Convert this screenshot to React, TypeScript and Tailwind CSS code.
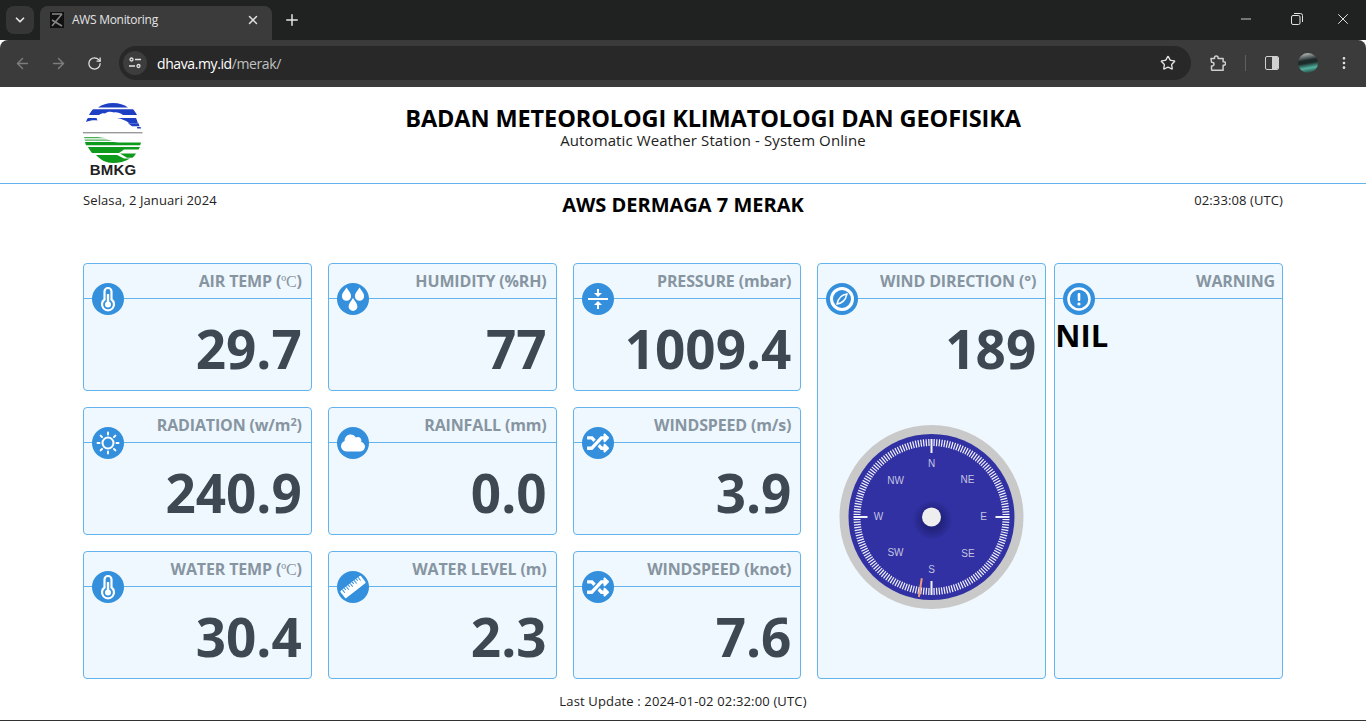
import { FaCloud, FaRandom } from "react-icons/fa";
import { ChevronDown, X, Plus, ArrowLeft, ArrowRight, RotateCw, Star, Minus, MoreVertical } from "lucide-react";
import type { ReactNode } from "react";

function Badge({ children }: { children: ReactNode }) {
  return (
    <div className="absolute left-2 top-[19px] flex size-8 items-center justify-center rounded-full bg-[#3490dc] text-white">
      {children}
    </div>
  );
}

const Thermo = () => (
  <svg viewBox="0 0 32 32" className="size-8">
    <path d="M12.500 8.500a3.500 3.500 0 0 1 7 0v8a6 6 0 1 1-7 0z" fill="none" stroke="#fff" strokeWidth="2.200" />
    <circle cx="16" cy="21.500" r="3" fill="#fff" />
    <rect x="14.800" y="11" width="2.400" height="9" fill="#fff" />
  </svg>
);

const Drops = () => (
  <svg viewBox="0 0 32 32" className="size-8" fill="#fff">
    <path d="M9.500 4.500c2.200 3.500 4.600 5.800 4.600 8.700a4.600 4.600 0 0 1-9.200 0c0-2.900 2.400-5.200 4.600-8.700z" />
    <path d="M22.500 4.500c2.200 3.500 4.600 5.800 4.600 8.700a4.600 4.600 0 0 1-9.200 0c0-2.900 2.400-5.200 4.600-8.700z" />
    <path d="M16 15c2.200 3.500 4.400 5.700 4.400 8.500a4.400 4.400 0 0 1-8.800 0c0-2.800 2.200-5 4.400-8.500z" />
  </svg>
);

const Compress = () => (
  <svg viewBox="0 0 32 32" className="size-8" fill="#fff">
    <rect x="6" y="15" width="20" height="2" />
    <rect x="15" y="6" width="2" height="6" />
    <path d="M12 10h8l-4 4z" />
    <rect x="15" y="20" width="2" height="6" />
    <path d="M12 22h8l-4-4z" />
  </svg>
);

const Sun = () => (
  <svg viewBox="0 0 32 32" className="size-8" fill="none" stroke="#fff" strokeWidth="2" strokeLinecap="round">
    <circle cx="16" cy="16" r="5.500" />
    <path d="M16 5.500v2M16 24.500v2M5.500 16h2M24.500 16h2M8.600 8.600l1.400 1.400M22 22l1.400 1.400M8.600 23.400l1.400-1.400M22 10l1.400-1.400" />
  </svg>
);

const Ruler = () => (
  <svg viewBox="0 0 32 32" className="size-8">
    <g transform="rotate(-38 16 16)">
      <rect x="3" y="11.500" width="26" height="9" rx="1" fill="#fff" />
      <path d="M6 11.500v4M8.500 11.500v2.500M11 11.500v4M13.500 11.500v2.500M16 11.500v4M18.500 11.500v2.500M21 11.500v4M23.500 11.500v2.500M26 11.500v4" stroke="#3490dc" strokeWidth="1" />
    </g>
  </svg>
);

const CompassIcon = () => (
  <svg viewBox="0 0 32 32" className="size-8">
    <circle cx="16" cy="16" r="10.500" fill="none" stroke="#fff" strokeWidth="3" />
    <path d="M21 11c-4.500.5-8.500 3.500-10 10 4.500-.5 8.500-3.500 10-10z" fill="none" stroke="#fff" strokeWidth="1.400" />
  </svg>
);

const Alert = () => (
  <svg viewBox="0 0 32 32" className="size-8">
    <circle cx="16" cy="16" r="10.500" fill="none" stroke="#fff" strokeWidth="2.500" />
    <rect x="14.700" y="10" width="2.600" height="8" rx="1" fill="#fff" />
    <circle cx="16" cy="21" r="1.600" fill="#fff" />
  </svg>
);

const Celsius = () => <span className="font-['Liberation_Serif',serif] font-normal">ºC</span>;

function Card({ title, value, icon }: { title: ReactNode; value: string; icon: ReactNode }) {
  return (
    <div className="relative rounded-[4px] border border-[#63b3ed] bg-[#eff8ff]">
      <div className="h-[35px] border-b border-[#63b3ed] pr-[9px] pt-[5px] text-right text-[16px] leading-[24px] font-bold tracking-[-0.15px] text-[#8795a1]">
        {title}
      </div>
      <Badge>{icon}</Badge>
      <div className="pr-[9px] pt-[14px] text-right text-[53px] leading-[72px] font-bold text-[#3d4852]">{value}</div>
    </div>
  );
}

function Compass() {
  const ticks = [];
  for (let a = 0; a < 360; a += 2) {
    const main = a % 45 === 0;
    ticks.push(
      <line key={a} x1="100" y1={main ? 36 : 29} x2="100" y2="22" strokeWidth={main ? 2 : 1.200} transform={`rotate(${a} 100 100)`} />
    );
  }
  const labels: [string, number, number][] = [
    ["N", 100, 46], ["NE", 136, 62], ["E", 152, 99], ["SE", 136.500, 136], ["S", 100, 152], ["SW", 64, 135], ["W", 47, 99], ["NW", 64, 63],
  ];
  return (
    <svg viewBox="0 0 200 200" className="size-[200px] -translate-x-[0.5px]">
      <defs>
        <radialGradient id="hubShade">
          <stop offset="45%" stopColor="#15155c" stopOpacity="0.55" />
          <stop offset="100%" stopColor="#15155c" stopOpacity="0" />
        </radialGradient>
      </defs>
      <circle cx="100" cy="100" r="92" fill="#c9c9c9" />
      <circle cx="100" cy="100" r="83" fill="#3131a3" />
      <g stroke="#f2f2fa">{ticks}</g>
      <g fill="#c4c4e0" fontFamily="'Liberation Sans', sans-serif" fontSize="10" textAnchor="middle" dominantBaseline="central">
        {labels.map(([t, x, y]) => (
          <text key={t} x={x} y={y}>{t}</text>
        ))}
      </g>
      <line x1="100" y1="19" x2="100" y2="38" stroke="#ea9a7c" strokeWidth="2" transform="rotate(189 100 100)" />
      <circle cx="101" cy="103" r="20" fill="url(#hubShade)" />
      <circle cx="100" cy="100" r="9.500" fill="#eeeeee" />
    </svg>
  );
}

function BmkgLogo() {
  return (
    <div className="flex w-[60px] flex-col items-center">
      <svg viewBox="0 0 60 60" className="h-[60px] w-[60px]">
        <path d="M15 4.500C19 1.500 24 0 30 0s11 1.500 15 4.500z" fill="#1d3fc4" />
        <path d="M6 12c1-2 2.500-4 4-5.700h40c1.500 1.700 3 3.700 4 5.700H40c-3-2-6-3-9-2.500-3-1.500-7-1-9 1-2-.5-4 0-6 1.500z" fill="#1d3fc4" />
        <path d="M3 19c.5-1.500 1-3 2-4h8.500l1 2.500c-4-.5-8 0-11.500 1.500z" fill="#1d3fc4" />
        <path d="M34 15h19c.7 1.500 1.300 3 1.800 5H46c-3-2.500-7-4-12-5z" fill="#1d3fc4" />
        <path d="M45 20.300h10.500c.4 1 .7 2 1 2.900H49z" fill="#1d3fc4" />
        <path d="M54 24h3.500l.7 1.500h-4z" fill="#1d3fc4" />
        <rect x="0" y="29" width="59.500" height="1.400" fill="#9a9a9a" />
        <path d="M1 34h14l8 1.300H1.300z" fill="#4fae58" />
        <path d="M1.500 36.500h22l6 1.300H2z" fill="#4fae58" />
        <path d="M2 39h28l6 .5h22l-.8 2.800H3z" fill="#0e9a1a" />
        <path d="M5 44h52l-1.500 2.500H41L36 50H9c-1.500-1.800-3-4-4-6z" fill="#0e9a1a" />
        <path d="M37 50.500h16c-.8 1.500-2 3-3.500 4.200H44z" fill="#0e9a1a" />
        <path d="M13 52h21l7 3.500h6C42 58.500 36 60 30 60c-6.500 0-12.500-3-17-8z" fill="#0e9a1a" />
      </svg>
      <div className="-mt-[1px] font-['Liberation_Sans',sans-serif] text-[15px] leading-[15px] font-bold tracking-[0.2px] text-[#222]">BMKG</div>
    </div>
  );
}

function BrowserChrome() {
  return (
    <div className="font-['Open_Sans',sans-serif] text-[#e3e3e3]">
      <div className="flex h-10 items-end bg-[#202221] pl-[6px]">
        <div className="mb-[6px] flex size-7 items-center justify-center rounded-lg bg-[#363636]">
          <ChevronDown size={14} strokeWidth={3} />
        </div>
        <div className="ml-[6px] flex h-[34px] w-[232px] items-center rounded-t-lg bg-[#3b3b3b] pb-[6px] pl-[10px] pr-[12px]">
          <svg viewBox="0 0 14 16" className="h-4 w-[14px]">
            <rect width="14" height="16" fill="#111" />
            <path d="M2 14 12 2M2 8l10 6M2 2h10" stroke="#888" strokeWidth="1.500" fill="none" />
          </svg>
          <span className="ml-2 flex-1 text-[12px] tracking-[-0.3px]">AWS Monitoring</span>
          <X size={14} strokeWidth={2.500} />
        </div>
        <Plus size={18} className="mb-[11px] ml-[11px]" />
        <div className="mb-[12px] ml-auto flex items-center pr-[14px]">
          <Minus size={16} strokeWidth={1.300} className="mr-[37px]" />
          <svg viewBox="0 0 12 12" className="mr-[31px] size-3" fill="none" stroke="#e3e3e3" strokeWidth="1">
            <rect x="0.500" y="2.500" width="8.500" height="9" rx="1.500" />
            <path d="M3 .5h6.500a2 2 0 0 1 2 2V9" />
          </svg>
          <X size={18} strokeWidth={1.300} />
        </div>
      </div>
      <div className="flex h-[47px] items-center rounded-t-lg bg-[#3b3b3b] pb-[1px] pl-[14px] pr-[14px]">
        <ArrowLeft size={17} className="text-[#7d7d7d]" />
        <ArrowRight size={17} className="ml-[19px] text-[#7d7d7d]" />
        <RotateCw size={15} className="ml-[20px]" />
        <div className="ml-[17px] flex h-[34px] w-[1072px] items-center rounded-full bg-[#282828] pl-[4px] pr-[15px]">
          <div className="flex size-6 items-center justify-center rounded-full bg-[#3d3d3d]">
            <svg viewBox="0 0 14 12" className="h-3 w-[14px]" fill="none" stroke="#e3e3e3" strokeWidth="1.300">
              <circle cx="3.500" cy="2.500" r="1.500" /><path d="M7 2.500h6M1 9h6" /><circle cx="10.500" cy="9" r="1.500" />
            </svg>
          </div>
          <span className="ml-[10px] text-[14px] tracking-[-0.4px] text-white">dhava.my.id<span className="text-[#c0c0c0]">/merak/</span></span>
          <Star size={16} className="ml-auto" />
        </div>
        <svg viewBox="0 0 16 16" className="ml-[19px] size-4" fill="none" stroke="#d0d0d0" strokeWidth="1.500" strokeLinejoin="round">
          <path d="M1 3.500h3.500V2.800a1.800 1.800 0 0 1 3.600 0v.7h5v3.200h.7a1.800 1.800 0 0 1 0 3.600h-.7v5H2.500a1 1 0 0 1-1-1V11c1.800.2 2.500-1 2.500-2S3 7 1.500 7.200z" />
        </svg>
        <div className="ml-[19px] h-4 w-px bg-[#5f5f5f]" />
        <div className="ml-[19px] flex h-[14px] w-[14px] overflow-hidden rounded-[2px] border border-[#d0d0d0]">
          <div className="w-1/2" />
          <div className="w-1/2 bg-[#d0d0d0]" />
        </div>
        <div className="ml-[19px] size-5 rounded-full bg-[linear-gradient(170deg,#d8d8d8_0%,#1d2a2a_38%,#1d2a2a_50%,#4fb3a0_72%,#222_100%)]" />
        <MoreVertical size={16} className="ml-[18px]" />
      </div>
    </div>
  );
}

export default function App() {
  return (
    <div className="h-[721px] w-[1366px] overflow-hidden bg-white font-['Open_Sans',sans-serif] text-black">
      <BrowserChrome />
      <header className="h-[97px] border-b border-[#63b3ed]">
        <div className="mx-auto flex w-[1200px] pt-4">
          <BmkgLogo />
          <div className="flex-1 pt-[1px] text-center">
            <h1 className="text-[23.5px] leading-[28px] font-bold tracking-[-0.1px]">BADAN METEOROLOGI KLIMATOLOGI DAN GEOFISIKA</h1>
            <p className="text-[15px] leading-[16px] tracking-[0.1px] text-[#222]">Automatic Weather Station - System Online</p>
          </div>
        </div>
      </header>
      <main className="mx-auto w-[1200px]">
        <div className="flex h-[79px] items-start justify-between text-[13px] leading-[18px] tracking-[0.1px] text-[#222]">
          <span className="w-[250px] pt-[7px]">Selasa, 2 Januari 2024</span>
          <span className="pt-[7px] text-[20px] leading-[28px] font-bold tracking-normal text-black">AWS DERMAGA 7 MERAK</span>
          <span className="w-[250px] pt-[7px] text-right">02:33:08 (UTC)</span>
        </div>
        <div className="flex gap-4">
          <div className="grid h-[416px] w-[718.4px] grid-cols-3 grid-rows-3 gap-4">
            <Card title={<>AIR TEMP (<Celsius />)</>} value="29.7" icon={<Thermo />} />
            <Card title="HUMIDITY (%RH)" value="77" icon={<Drops />} />
            <Card title="PRESSURE (mbar)" value="1009.4" icon={<Compress />} />
            <Card title={<>RADIATION (w/m<sup className="text-[11px]">2</sup>)</>} value="240.9" icon={<Sun />} />
            <Card title="RAINFALL (mm)" value="0.0" icon={<FaCloud size={24} />} />
            <Card title="WINDSPEED (m/s)" value="3.9" icon={<FaRandom size={22} />} />
            <Card title={<>WATER TEMP (<Celsius />)</>} value="30.4" icon={<Thermo />} />
            <Card title="WATER LEVEL (m)" value="2.3" icon={<Ruler />} />
            <Card title="WINDSPEED (knot)" value="7.6" icon={<FaRandom size={22} />} />
          </div>
          <div className="flex flex-1 gap-2">
            <div className="relative flex-1 rounded-[4px] border border-[#63b3ed] bg-[#eff8ff]">
              <div className="h-[35px] border-b border-[#63b3ed] pr-[9px] pt-[5px] text-right text-[16px] leading-[24px] font-bold tracking-[-0.15px] text-[#8795a1]">WIND DIRECTION (°)</div>
              <Badge><CompassIcon /></Badge>
              <div className="pr-[9px] pt-[14px] text-right text-[53px] leading-[72px] font-bold text-[#3d4852]">189</div>
              <div className="mt-[32px] flex justify-center">
                <Compass />
              </div>
            </div>
            <div className="relative flex-1 rounded-[4px] border border-[#63b3ed] bg-[#eff8ff]">
              <div className="h-[35px] border-b border-[#63b3ed] pr-[7px] pt-[5px] text-right text-[16px] leading-[24px] font-bold tracking-[-0.15px] text-[#8795a1]">WARNING</div>
              <Badge><Alert /></Badge>
              <div className="pt-[16px] text-[31px] leading-[40px] font-bold text-black">NIL</div>
            </div>
          </div>
        </div>
        <p className="pt-[13px] text-center text-[13px] leading-[18px] tracking-[0.15px] text-[#222]">Last Update : 2024-01-02 02:32:00 (UTC)</p>
      </main>
      <div className="mt-[10px] h-px bg-[#333]" />
    </div>
  );
}
